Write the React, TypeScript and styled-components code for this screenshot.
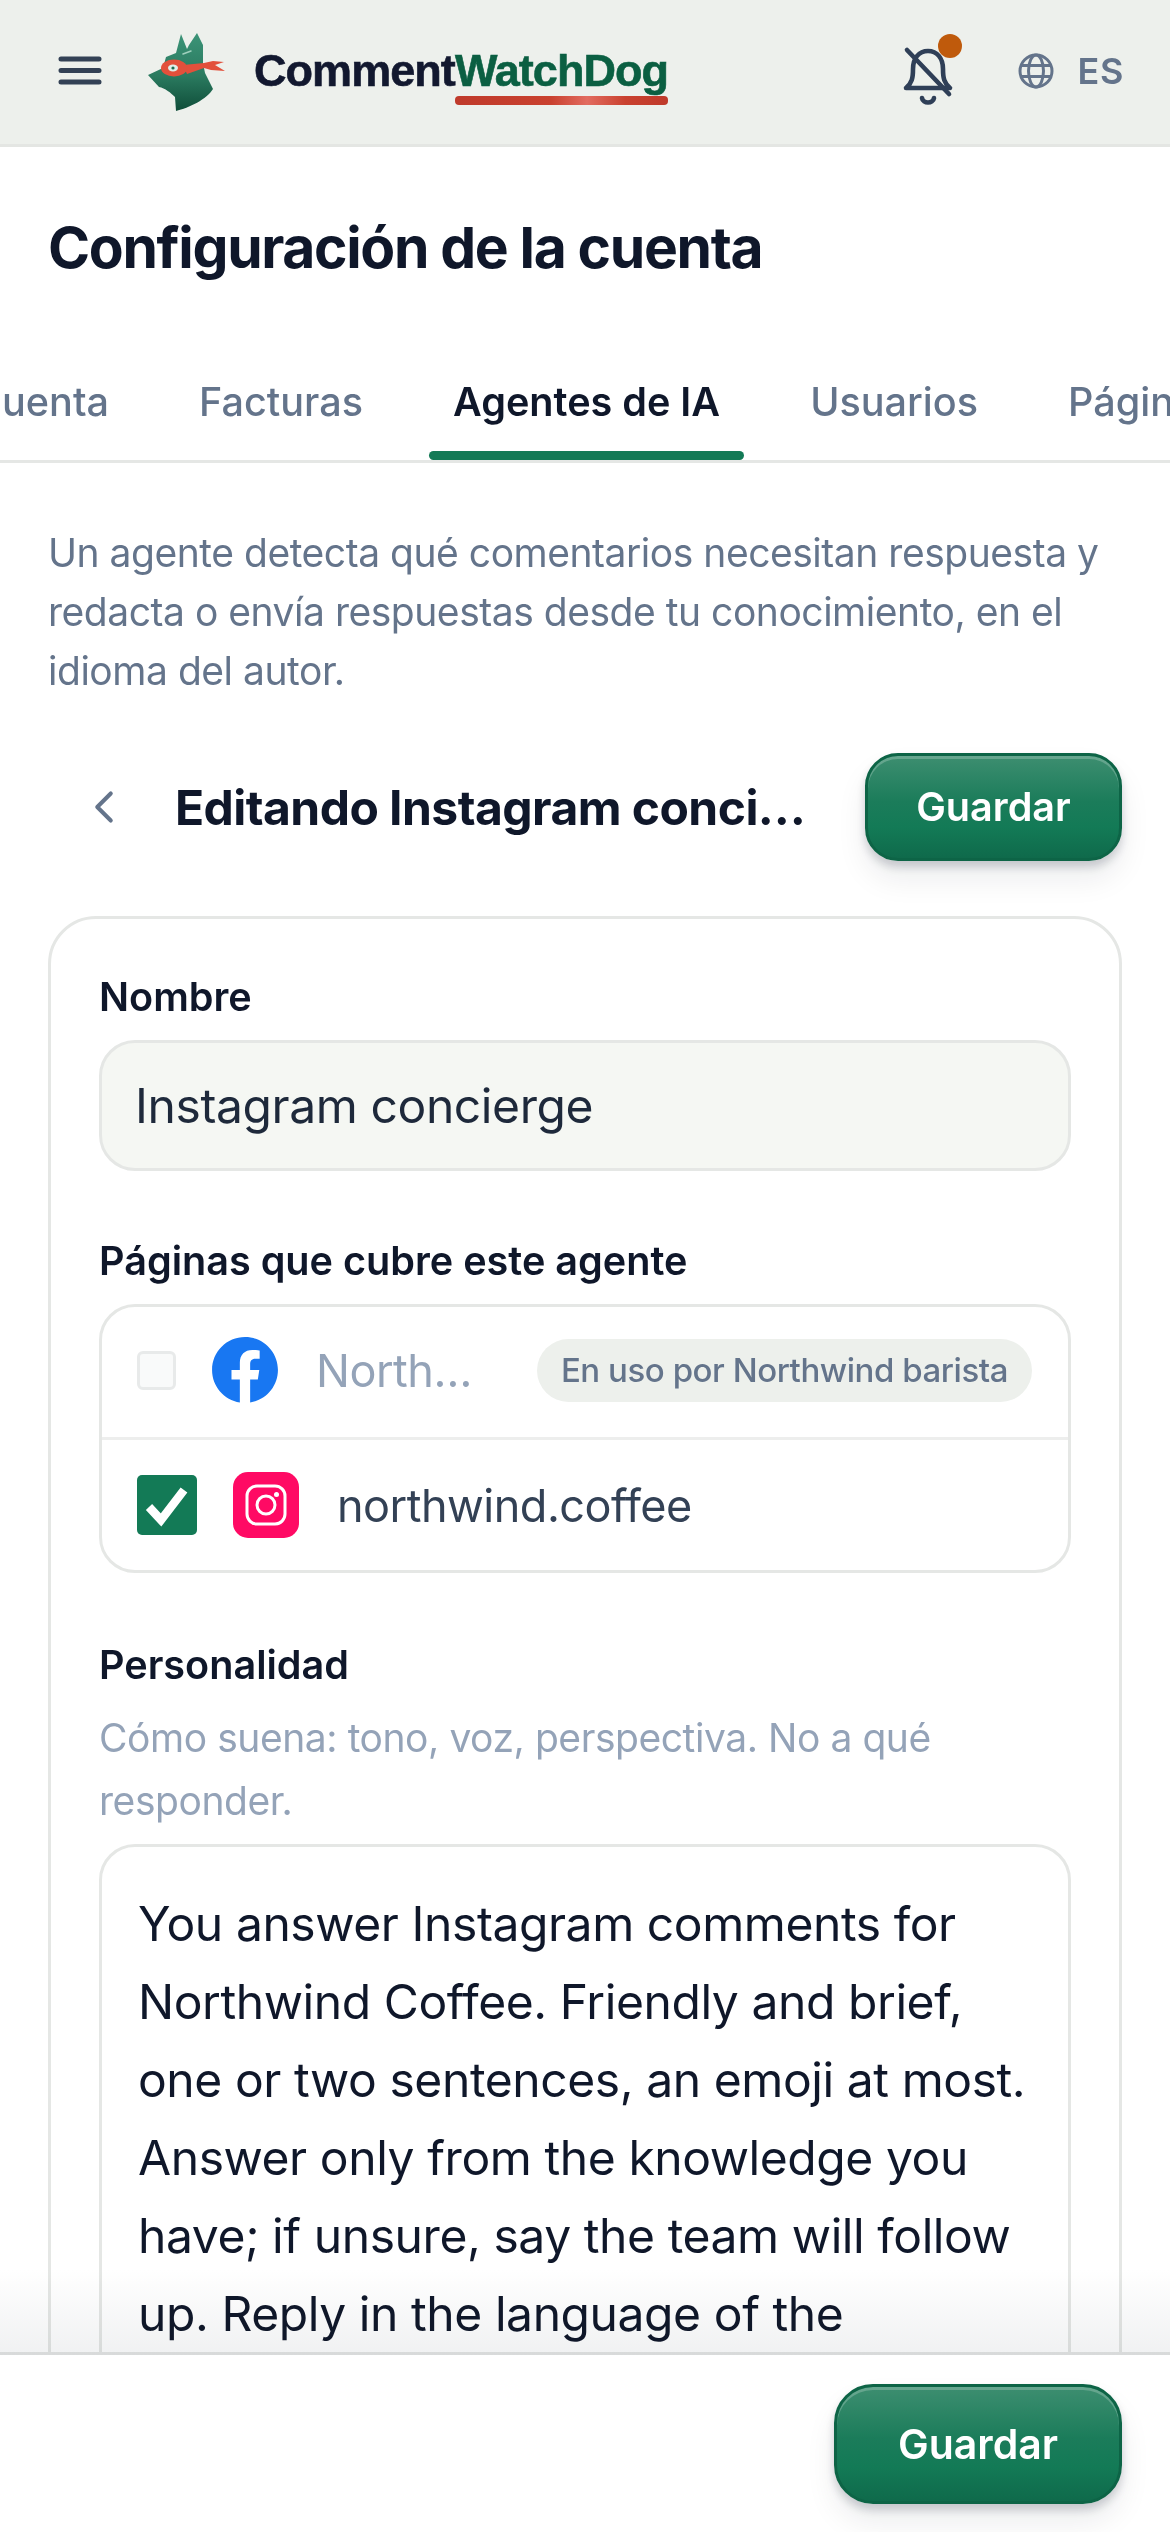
import React from 'react';
import styled, { createGlobalStyle } from 'styled-components';
import { FaFacebook } from 'react-icons/fa';
import { ChevronLeft } from 'lucide-react';

const GlobalStyle = createGlobalStyle`
  html, body {
    margin: 0;
    padding: 0;
    height: 2532px;
    overflow: hidden;
    background: #ffffff;
  }
  body {
    font-family: Inter, "Noto Sans", sans-serif;
    color: #0f172a;
  }
  * {
    box-sizing: border-box;
  }
`;

const Page = styled.div`
  position: relative;
  width: 1170px;
  height: 2532px;
  overflow: hidden;
  background: #fff;
`;

const Header = styled.header`
  display: flex;
  align-items: center;
  height: 147px;
  padding: 0 46px 3px 58px;
  background: #edf0ec;
  border-bottom: 3px solid #e4e6e3;
`;

const Brand = styled.div`
  display: flex;
  align-items: center;
  margin-left: 19px;
  flex: 1;
`;

const DogSvg = styled.svg`
  flex-shrink: 0;
  margin-top: -12px;
`;

const Wordmark = styled.div`
  position: relative;
  margin-left: 3px;
  font-family: "Liberation Sans", Arial, sans-serif;
  font-weight: 700;
  font-size: 45px;
  letter-spacing: -0.95px;
  line-height: 54px;
  color: #12182f;
  -webkit-text-stroke: 0.6px currentColor;
`;

const WordmarkAccent = styled.span`
  position: relative;
  color: #0b5f42;

  &::after {
    content: '';
    position: absolute;
    left: 0;
    right: 0;
    bottom: -9px;
    height: 9px;
    border-radius: 4px;
    background: linear-gradient(90deg, #bf3a2b 0%, #c9412f 45%, #e26c60 62%, #c9412f 80%, #bf3a2b 100%);
  }
`;

const BellWrap = styled.div`
  position: relative;
  width: 60px;
  height: 60px;
  margin-right: 60px;
  transform: translateY(4px);
`;

const Dot = styled.span`
  position: absolute;
  top: -11px;
  right: -4px;
  width: 24px;
  height: 24px;
  border-radius: 50%;
  background: #bf5a0c;
`;

const Lang = styled.div`
  display: flex;
  align-items: center;
  gap: 24px;
  font-size: 36px;
  font-weight: 600;
  letter-spacing: 0.6px;
  color: #64748b;
`;

const Main = styled.main`
  padding: 0 48px;
`;

const Title = styled.h1`
  margin: 68px 0 0;
  font-size: 57px;
  line-height: 66px;
  font-weight: 700;
  letter-spacing: -1.35px;
  color: #0f172a;
`;

const TabsBar = styled.nav`
  display: flex;
  align-items: stretch;
  height: 103px;
  margin: 79px -48px 0;
  overflow: hidden;
  border-bottom: 3px solid #e5e7e5;
`;

const TabsTrack = styled.div`
  display: flex;
  gap: 42px;
  flex-shrink: 0;
  margin-left: -51px;
`;

const Tab = styled.div<{ $active?: boolean }>`
  position: relative;
  display: flex;
  align-items: center;
  justify-content: center;
  padding: 0 24px 16px;
  font-size: 39.6px;
  font-weight: ${p => (p.$active ? 600 : 500)};
  color: ${p => (p.$active ? '#0f172a' : '#64748b')};
  white-space: nowrap;

  ${p =>
    p.$active &&
    `&::after {
      content: '';
      position: absolute;
      left: 0;
      right: 0;
      bottom: 0;
      height: 9px;
      border-radius: 5px;
      background: #137a56;
    }`}
`;

const Description = styled.p`
  margin: 60px 0 0;
  font-size: 39px;
  line-height: 59px;
  letter-spacing: -0.47px;
  color: #64748b;
`;

const EditBar = styled.div`
  display: flex;
  align-items: center;
  margin-top: 53px;
`;

const BackIcon = styled(ChevronLeft)`
  flex-shrink: 0;
  margin-left: 29px;
  color: #64748b;
`;

const EditTitle = styled.h2`
  flex: 1;
  min-width: 0;
  margin: 0 36px 0 44px;
  font-size: 48px;
  font-weight: 700;
  letter-spacing: -0.55px;
  overflow: hidden;
  white-space: nowrap;
  text-overflow: ellipsis;
  color: #0f172a;
`;

const SaveButton = styled.button<{ $large?: boolean }>`
  flex-shrink: 0;
  width: ${p => (p.$large ? 288 : 257)}px;
  height: ${p => (p.$large ? 120 : 108)}px;
  border: 3px solid #0d6446;
  border-radius: ${p => (p.$large ? 39 : 33)}px;
  background: linear-gradient(180deg, #3d8e70 0%, #1b7c5a 45%, #137a56 70%, #0f6a4b 100%);
  box-shadow: inset 0 3px 0 rgba(255, 255, 255, 0.22), 0 6px 9px rgba(15, 23, 42, 0.18), 0 18px 30px rgba(15, 23, 42, 0.08);
  font-family: Inter, sans-serif;
  font-size: ${p => (p.$large ? 41 : 39.6)}px;
  font-weight: 600;
  color: #fff;
  padding: 0;
`;

const Card = styled.section`
  height: 1700px;
  margin-top: 55px;
  padding: 51px 48px 0;
  border: 3px solid #e5e7e5;
  border-radius: 48px;
`;

const Label = styled.div`
  font-size: 39.6px;
  line-height: 54px;
  font-weight: 600;
  color: #0f172a;
`;

const NameInput = styled.div`
  display: flex;
  align-items: center;
  height: 131px;
  margin-top: 16px;
  padding: 0 33px;
  border: 3px solid #e5e7e5;
  border-radius: 36px;
  background: #f5f7f3;
  font-size: 48px;
  letter-spacing: -0.4px;
  color: #1e293b;
`;

const PagesLabel = styled(Label)`
  margin-top: 63px;
`;

const PagesList = styled.div`
  margin-top: 16px;
  border: 3px solid #e5e7e5;
  border-radius: 36px;
`;

const PageRow = styled.div`
  display: flex;
  align-items: center;
  height: 130px;
  padding: 0 36px 4px 35px;

  & + & {
    border-top: 3px solid #edeeed;
    height: 133px;
    padding-bottom: 0;
  }
`;

const BoxOff = styled.span`
  flex-shrink: 0;
  width: 39px;
  height: 39px;
  margin-right: 35px;
  border: 3px solid #e8eaea;
  border-radius: 6px;
  background: #f9fafa;
`;

const BoxOn = styled.span`
  display: flex;
  align-items: center;
  justify-content: center;
  flex-shrink: 0;
  width: 60px;
  height: 60px;
  margin-right: 36px;
  border-radius: 5px;
  background: #137a56;
`;

const FacebookIcon = styled(FaFacebook)`
  flex-shrink: 0;
  color: #1877f2;
  background: linear-gradient(#fff, #fff) center / 50% 70% no-repeat;
  border-radius: 50%;
`;

const PageName = styled.span<{ $muted?: boolean }>`
  flex: 1;
  min-width: 0;
  margin-left: ${p => (p.$muted ? 37 : 38)}px;
  font-size: 45px;
  letter-spacing: -0.5px;
  color: ${p => (p.$muted ? '#94a3b8' : '#334155')};
  overflow: hidden;
  white-space: nowrap;
  text-overflow: ellipsis;
`;

const UsedPill = styled.span`
  flex-shrink: 0;
  margin-left: 50px;
  height: 63px;
  line-height: 63px;
  padding: 0 24px;
  border-radius: 32px;
  background: #edf0ec;
  font-size: 33px;
  font-weight: 500;
  letter-spacing: -0.45px;
  color: #64748b;
  white-space: nowrap;
`;

const PersonalityLabel = styled(Label)`
  margin-top: 65px;
`;

const Hint = styled.p`
  margin: 14px 0 0;
  font-size: 39px;
  line-height: 63px;
  letter-spacing: -0.44px;
  color: #94a3b8;
`;

const PromptBox = styled.div`
  height: 1000px;
  margin-top: 12px;
  padding: 38px 36px;
  border: 3px solid #e5e7e5;
  border-radius: 36px;
  font-size: 48px;
  line-height: 78px;
  letter-spacing: -0.42px;
  color: #0f172a;
`;

const BottomBar = styled.footer`
  position: absolute;
  left: 0;
  right: 0;
  bottom: 0;
  display: flex;
  justify-content: flex-end;
  align-items: center;
  height: 180px;
  padding: 0 48px 0 0;
  background: #fff;
  border-top: 3px solid #e6e7e6;

  &::before {
    content: '';
    position: absolute;
    left: 0;
    right: 0;
    bottom: 100%;
    height: 85px;
    background: linear-gradient(180deg, #ffffff 0%, #f0f1f2 100%);
    mix-blend-mode: multiply;
  }
`;

const DogLogo = () => (
  <DogSvg width="130" height="110" viewBox="0 0 130 110">
    <defs>
      <linearGradient id="dogFill" x1="0" y1="0" x2="0" y2="1">
        <stop offset="0" stopColor="#3c9478" />
        <stop offset="0.55" stopColor="#2a7a5f" />
        <stop offset="1" stopColor="#0f4d39" />
      </linearGradient>
    </defs>
    <path
      d="M45 47 L55 43 L60 24 L66 39 L68 35 L76 23 L82 35 L82 53 L84 63 L92 79 C86 89 68 98 55 101 L54 87 C50 83 44 78 38 77 L27 65 L42 58 Z"
      fill="url(#dogFill)"
    />
    <path d="M62 44 L70 41" stroke="#9fd0bd" strokeWidth="1.5" strokeLinecap="round" />
    <path d="M62 55 L83 53 L92 51 L103 52 L94 55 L104 61 L90 60 L83 58 L66 64 Z" fill="#e2503b" />
    <ellipse cx="53" cy="58" rx="13" ry="8.5" fill="#e2503b" />
    <ellipse cx="52" cy="58" rx="5" ry="3.4" fill="#dfeee8" />
    <circle cx="52" cy="58" r="1.6" fill="#1c6a50" />
  </DogSvg>
);

const HamburgerIcon = () => (
  <svg width="44" height="29" viewBox="0 0 44 29" style={{ flexShrink: 0 }}>
    <path d="M3 3h38M3 14.5h38M3 26h38" stroke="#334155" strokeWidth="5" strokeLinecap="round" />
  </svg>
);

const BellOffIcon = () => (
  <svg width="60" height="60" viewBox="0 0 60 60" fill="none" stroke="#2f3f57" strokeWidth="4.6" strokeLinecap="round" strokeLinejoin="round">
    <path d="M8 43 C14 38 15 33 15 24 C15 13 21 6 30 6 C39 6 45 13 45 24 C45 33 46 38 52 43 Z" />
    <path d="M9 5 L51 49" />
    <path d="M24 53 C25 59 35 59 36 53" />
  </svg>
);

const GlobeIcon = () => (
  <svg width="36" height="36" viewBox="0 0 36 36" fill="none" stroke="#64748b" strokeWidth="3">
    <circle cx="18" cy="18" r="16" />
    <ellipse cx="18" cy="18" rx="7.5" ry="16" />
    <path d="M3.5 12.5h29M3.5 23.5h29" />
  </svg>
);

const CheckIcon = () => (
  <svg width="44" height="44" viewBox="0 0 44 44" fill="none" stroke="#fff" strokeWidth="8.5">
    <path d="M4 24 L16 37 L39 7" />
  </svg>
);

const InstagramIcon = () => (
  <svg width="66" height="66" viewBox="0 0 66 66" style={{ flexShrink: 0 }}>
    <rect width="66" height="66" rx="15" fill="#ff0a64" />
    <rect x="14" y="14" width="38" height="38" rx="10" fill="none" stroke="#fff" strokeWidth="3" />
    <circle cx="33" cy="33" r="9" fill="none" stroke="#fff" strokeWidth="3" />
    <circle cx="43.5" cy="22.5" r="2.5" fill="#fff" />
  </svg>
);

const App = () => (
  <Page>
    <GlobalStyle />
    <Header>
      <HamburgerIcon />
      <Brand>
        <DogLogo />
        <Wordmark>
          Comment<WordmarkAccent>WatchDog</WordmarkAccent>
        </Wordmark>
      </Brand>
      <BellWrap>
        <BellOffIcon />
        <Dot />
      </BellWrap>
      <Lang>
        <GlobeIcon />
        ES
      </Lang>
    </Header>
    <Main>
      <Title>Configuración de la cuenta</Title>
      <TabsBar>
        <TabsTrack>
          <Tab>Cuenta</Tab>
          <Tab>Facturas</Tab>
          <Tab $active>Agentes de IA</Tab>
          <Tab>Usuarios</Tab>
          <Tab>Páginas</Tab>
        </TabsTrack>
      </TabsBar>
      <Description>
        Un agente detecta qué comentarios necesitan respuesta y redacta o envía respuestas desde tu conocimiento, en el idioma del autor.
      </Description>
      <EditBar>
        <BackIcon size={54} strokeWidth={1.8} />
        <EditTitle>Editando Instagram concierge</EditTitle>
        <SaveButton>Guardar</SaveButton>
      </EditBar>
      <Card>
        <Label>Nombre</Label>
        <NameInput>Instagram concierge</NameInput>
        <PagesLabel>Páginas que cubre este agente</PagesLabel>
        <PagesList>
          <PageRow>
            <BoxOff />
            <FacebookIcon size={68} />
            <PageName $muted>Northwind Coffee</PageName>
            <UsedPill>En uso por Northwind barista</UsedPill>
          </PageRow>
          <PageRow>
            <BoxOn>
              <CheckIcon />
            </BoxOn>
            <InstagramIcon />
            <PageName>northwind.coffee</PageName>
          </PageRow>
        </PagesList>
        <PersonalityLabel>Personalidad</PersonalityLabel>
        <Hint>Cómo suena: tono, voz, perspectiva. No a qué responder.</Hint>
        <PromptBox>
          You answer Instagram comments for Northwind Coffee. Friendly and brief, one or two sentences, an emoji at most. Answer only from the knowledge you have; if unsure, say the team will follow up. Reply in the language of the
        </PromptBox>
      </Card>
    </Main>
    <BottomBar>
      <SaveButton $large>Guardar</SaveButton>
    </BottomBar>
  </Page>
);

export default App;
